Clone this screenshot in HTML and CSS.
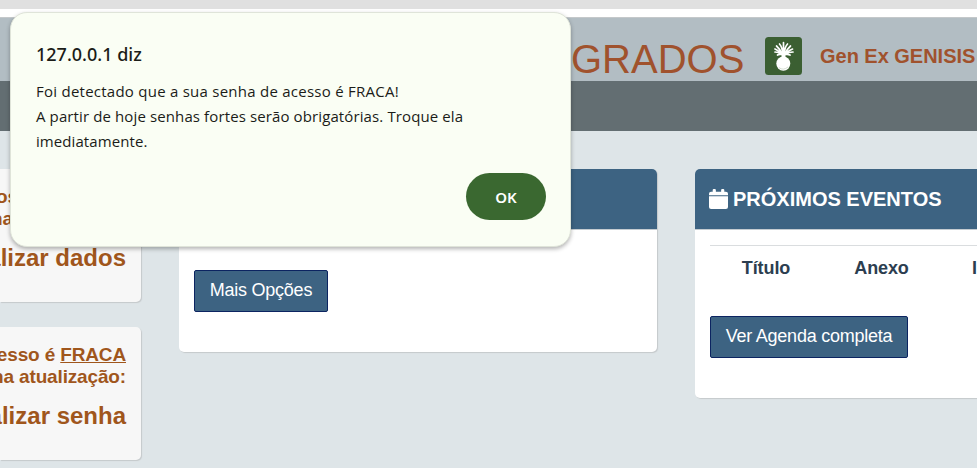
FILE: index.html
```html
<!DOCTYPE html>
<html lang="pt-BR">
<head>
<meta charset="utf-8">
<title>Painel</title>
<link rel="stylesheet" href="styles.css">
</head>
<body>
<div class="chrome-strip"></div>
<header class="header">
  <h1 class="brand">GRADOS</h1>
  <svg class="badge" viewBox="0 0 37 38" aria-hidden="true">
    <rect width="37" height="38" rx="3.5" fill="#3b5f32"/>
    <g fill="none" stroke="#fff" stroke-linecap="round" stroke-width="1.700">
      <path d="M18.500 18V5.500M17.800 18Q17.500 10 14.500 7M19.200 18Q19.500 10 22.500 7M17 17Q15 12 11.500 9M20 17Q22 12 25.500 9M16.500 17Q14 13.500 10 12M20.500 17Q23 13.500 27.500 12M16.500 17Q13 15 10 15M20.500 17Q24 15 28 15M16.500 17.500Q14 17 12.500 18M20.500 17.500Q23 17 25 18"/>
    </g>
    <path d="M16.500 16.500h4v4h-4z" fill="#fff"/>
    <ellipse cx="18.300" cy="26.600" rx="7" ry="7.200" fill="#fff"/>
    <path d="M14 30.500q4 3.500 9-.5" fill="none" stroke="#b9c7b5" stroke-width=".6"/>
  </svg>
  <span class="user">Gen Ex GENISIS</span>
</header>
<nav class="nav"></nav>
<main class="board">
  <aside class="notices">
    <section class="notice first">
      <p class="notice-text start">os<br><span class="tail">na</span></p>
      <p class="notice-action">alizar dados</p>
    </section>
    <section class="notice second">
      <p class="notice-text">esso é <u>FRACA</u><br>na atualização:</p>
      <p class="notice-action">alizar senha</p>
    </section>
  </aside>
  <section class="card options">
    <div class="card-head"></div>
    <div class="card-body"><button class="btn">Mais Opções</button></div>
  </section>
  <section class="card events">
    <div class="card-head">
      <svg class="calendar" viewBox="0 0 18 21" preserveAspectRatio="none" aria-hidden="true"><path fill="#fff" d="M3.500 3V1q0-1 1-1h1q1 0 1 1v2h5V1q0-1 1-1h1q1 0 1 1v2H16q2 0 2 2v1.500H0V5q0-2 2-2zM0 7.500h18v11.500q0 2-2 2H2q-2 0-2-2z"/></svg>
      <h2 class="card-title">PRÓXIMOS EVENTOS</h2>
    </div>
    <div class="card-body">
      <div class="table-head"><span class="col">Título</span><span class="col">Anexo</span><span class="col last">I</span></div>
      <button class="btn wide">Ver Agenda completa</button>
    </div>
  </section>
</main>
<div class="dialog" role="alertdialog">
  <h2 class="dialog-title">127.0.0.1 diz</h2>
  <p class="dialog-text"><span class="l1">Foi detectado que a sua senha de acesso é FRACA!</span><br><span class="l2">A partir de hoje senhas fortes serão obrigatórias. Troque ela</span><br><span class="l3">imediatamente.</span></p>
  <button class="ok">OK</button>
</div>
</body>
</html>
```
FILE: styles.css
```css
* { box-sizing: border-box; }
html, body { height: 100%; }
body {
  margin: 0;
  overflow: hidden;
  background: #dee5e8;
  font-family: "Liberation Sans", Arial, sans-serif;
  color: #2c3e50;
}
h1, h2, p { margin: 0; }
button { font: inherit; white-space: nowrap; }
.chrome-strip { height: 17px; background: #fff; border-top: 9px solid #e0e0e0; }
.header {
  height: 64px;
  padding-left: 571px;
  display: flex;
  background: #b2bdc3;
  border-top: 1px solid #c4c8ca;
  color: #a0522d;
  white-space: nowrap;
}
.brand { width: 194px; padding-top: 18px; font-size: 40px; line-height: 46px; font-weight: 400; }
.badge { flex: none; width: 37px; height: 38px; margin-top: 19px; }
.user { margin: 27px 0 0 18px; font-size: 20px; line-height: 23px; font-weight: 700; letter-spacing: -.02px; }
.nav { height: 50px; background: #636e72; }
.board {
  display: grid;
  grid-template-columns: 141px 478px 320px;
  column-gap: 38px;
  padding-top: 38px;
  align-items: start;
}
.notice {
  display: flex;
  flex-direction: column;
  align-items: flex-end;
  background: #f7f7f7;
  border-radius: 0 5px 5px 0;
  box-shadow: 1px 1px 1px #c5c9cb;
  color: #a0561c;
  font-weight: 700;
  text-align: right;
  padding: 17px 15px 0 0;
  white-space: nowrap;
}
.first { height: 133px; }
.second { height: 133px; margin-top: 25px; }
.notice-text { font-size: 19px; line-height: 22px; letter-spacing: -.15px; }
.start { align-self: flex-start; text-align: left; margin-left: -4px; }
.tail { margin-left: -5px; }
.notice-action { margin-top: 14px; font-size: 24px; line-height: 28px; }
.card { background: #fff; border-radius: 5px; box-shadow: 1px 1px 1px #c5c9cb; }
.options { height: 183px; }
.events { height: 229px; }
.card-head {
  height: 61px;
  padding: 0 14px;
  display: flex;
  align-items: center;
  gap: 5px;
  background: #3d6382;
  border-bottom: 1px solid #c5ccd1;
  border-radius: 5px 5px 0 0;
}
.calendar { width: 19px; height: 20px; }
.card-title { color: #fff; font-size: 20px; line-height: 24px; white-space: nowrap; }
.card-body { padding: 15px; }
.options .card-body { padding-top: 40px; }
.btn {
  display: block;
  width: 134px;
  height: 42px;
  padding: 0 0 2px;
  color: #fff;
  background: #3d6382;
  border: 1px solid #0c2461;
  border-radius: 2px;
  font-size: 18px;
  letter-spacing: -.25px;
}
.wide { width: 198px; }
.table-head {
  display: grid;
  grid-template-columns: 112px 119px 59px;
  height: 71px;
  padding-top: 12px;
  border-top: 1px solid #dadddf;
  font-size: 18px;
  line-height: 21px;
  font-weight: 700;
  letter-spacing: -.1px;
  text-align: center;
}
.last { text-align: left; padding-left: 31px; }
.dialog {
  position: absolute;
  left: 10px;
  top: 12px;
  width: 561px;
  height: 235px;
  padding: 27px 24px 0 25px;
  background: #fafef4;
  border: 1px solid #dfe4d9;
  border-radius: 17px;
  box-shadow: 0 2px 4px rgba(0, 0, 0, .3);
  color: #1b1c18;
  font-family: "Noto Sans", sans-serif;
}
.dialog-title { font-size: 18px; line-height: 28px; font-weight: 500; }
.dialog-text { margin-top: 11px; font-family: "Open Sans", sans-serif; font-size: 15px; line-height: 25px; white-space: nowrap; }
.l1 { letter-spacing: .25px; }
.l2 { letter-spacing: .115px; }
.l3 { letter-spacing: .08px; }
.ok {
  display: block;
  width: 80px;
  height: 47px;
  margin: 19px 0 0 auto;
  padding: 0;
  border: 0;
  border-radius: 24px;
  background: #3a6830;
  color: #fff;
  font-size: 15px;
  font-weight: 600;
}
```
